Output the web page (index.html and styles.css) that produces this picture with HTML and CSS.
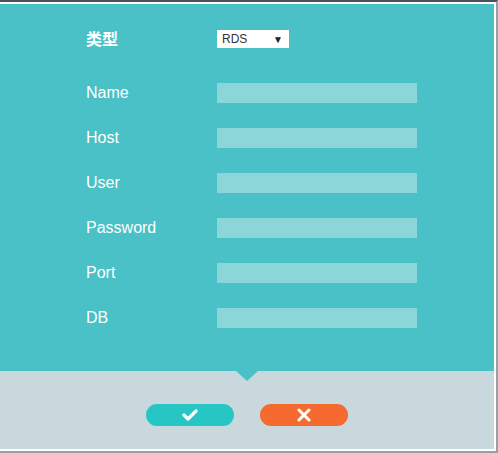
FILE: index.html
```html
<!DOCTYPE html>
<html>
<head>
<meta charset="utf-8">
<link rel="stylesheet" href="styles.css">
</head>
<body>
<div class="frame">
  <div class="dialog">
    <div class="form">
      <div class="row type-row">
        <div class="label cjk">类型</div>
        <div class="select"><span>RDS</span><span class="arrow">▼</span></div>
      </div>
      <div class="row"><div class="label">Name</div><div class="input"></div></div>
      <div class="row"><div class="label">Host</div><div class="input"></div></div>
      <div class="row"><div class="label">User</div><div class="input"></div></div>
      <div class="row"><div class="label">Password</div><div class="input"></div></div>
      <div class="row"><div class="label">Port</div><div class="input"></div></div>
      <div class="row"><div class="label">DB</div><div class="input"></div></div>
    </div>
    <div class="actions">
      <button class="btn ok" type="button">
        <svg width="16" height="12" viewBox="0 0 16 12"><path d="M2 6 L6 10 L14 2" fill="none" stroke="#fff" stroke-width="3.2" stroke-linecap="round" stroke-linejoin="round"/></svg>
      </button>
      <button class="btn cancel" type="button">
        <svg width="14" height="14" viewBox="0 0 14 14"><path d="M2 2 L12 12 M12 2 L2 12" fill="none" stroke="#fff" stroke-width="3" stroke-linecap="round"/></svg>
      </button>
    </div>
  </div>
</div>
</body>
</html>
```
FILE: styles.css
```css
* { box-sizing: border-box; }
html, body { margin: 0; padding: 0; }
body {
  width: 498px;
  height: 453px;
  background: #ffffff;
  font-family: Arial, "Liberation Sans", sans-serif;
  overflow: hidden;
}
.frame {
  width: 498px;
  height: 453px;
  border-top: 2px solid #4c4e62;
  border-right: 2px solid #9a9ea6;
  border-bottom: 2px solid #9a9ea6;
  padding: 2px 2px 2px 0;
  background: #ffffff;
}
.dialog {
  width: 494px;
  height: 445px;
  display: flex;
  flex-direction: column;
}
.form {
  position: relative;
  height: 367px;
  background: #49c1c6;
  padding: 26px 0 0 86px;
  display: flex;
  flex-direction: column;
  gap: 25px;
}
.form::after {
  content: "";
  position: absolute;
  left: 236px;
  bottom: -10px;
  width: 0;
  height: 0;
  border-left: 11px solid transparent;
  border-right: 11px solid transparent;
  border-top: 10px solid #49c1c6;
}
.row {
  display: flex;
  align-items: center;
  height: 20px;
}
.type-row {
  height: 18px;
  margin-bottom: 10px;
}
.label {
  width: 131px;
  color: #ffffff;
  font-size: 16px;
  line-height: 20px;
}
.cjk {
  font-family: "Noto Sans CJK SC", sans-serif;
  font-weight: 700;
  font-size: 16px;
  position: relative;
  top: -1px;
}
.select {
  width: 72px;
  height: 18px;
  background: #ffffff;
  display: flex;
  align-items: center;
  justify-content: space-between;
  padding: 0 6px 0 5px;
  font-size: 12px;
  color: #333333;
}
.arrow {
  font-size: 10px;
  color: #222;
}
.input {
  width: 200px;
  height: 20px;
  background: #8ad6d9;
}
.actions {
  flex: 1;
  background: #c9d8dc;
  display: flex;
  justify-content: center;
  align-items: flex-start;
  gap: 26px;
  padding-top: 33px;
}
.btn {
  width: 88px;
  height: 22px;
  border: none;
  border-radius: 11px;
  padding: 0;
  display: flex;
  align-items: center;
  justify-content: center;
}
.ok { background: #26c6c5; }
.cancel { background: #f46a2f; }
```
